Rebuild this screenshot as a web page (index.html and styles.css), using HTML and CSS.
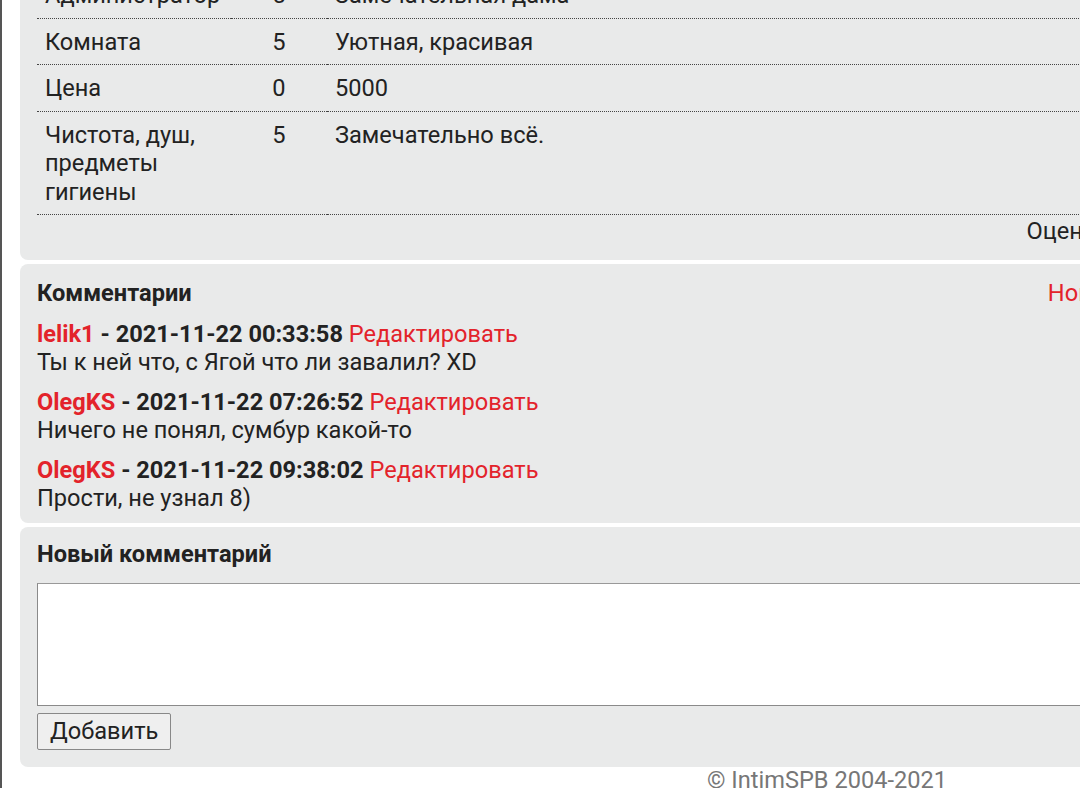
FILE: index.html
```html
<!DOCTYPE html>
<html lang="ru">
<head>
  <meta charset="UTF-8">
  <meta name="viewport" content="width=device-width, initial-scale=1.0">
  <title>Отчёт — IntimSPB</title>
  <link rel="stylesheet" href="styles.css">
</head>
<body>
  <div class="page">
    <!-- Оценки по пунктам -->
    <div class="panel report">
      <table class="marks">
        <tr>
          <td class="name">Администратор</td>
          <td class="mark">5</td>
          <td class="note">Замечательная дама</td>
        </tr>
        <tr>
          <td class="name">Комната</td>
          <td class="mark">5</td>
          <td class="note">Уютная, красивая</td>
        </tr>
        <tr>
          <td class="name">Цена</td>
          <td class="mark">0</td>
          <td class="note">5000</td>
        </tr>
        <tr>
          <td class="name">Чистота, душ, предметы гигиены</td>
          <td class="mark">5</td>
          <td class="note">Замечательно всё.</td>
        </tr>
      </table>
      <div class="total">Оценка отчёта: 3.75 (4)</div>
    </div>

    <!-- Комментарии -->
    <div class="panel comments">
      <div class="comments-head">
        <span class="title">Комментарии</span>
        <a href="#new" class="link">Новый комментарий</a>
      </div>
      <div class="comment">
        <div class="meta"><a href="#" class="user">lelik1</a> - 2021-11-22 00:33:58 <a href="#" class="edit">Редактировать</a></div>
        <div class="text">Ты к ней что, с Ягой что ли завалил? XD</div>
      </div>
      <div class="comment">
        <div class="meta"><a href="#" class="user">OlegKS</a> - 2021-11-22 07:26:52 <a href="#" class="edit">Редактировать</a></div>
        <div class="text">Ничего не понял, сумбур какой-то</div>
      </div>
      <div class="comment">
        <div class="meta"><a href="#" class="user">OlegKS</a> - 2021-11-22 09:38:02 <a href="#" class="edit">Редактировать</a></div>
        <div class="text">Прости, не узнал 8)</div>
      </div>
    </div>

    <!-- Форма нового комментария -->
    <form class="panel new-comment" id="new">
      <div class="title">Новый комментарий</div>
      <textarea name="text"></textarea>
      <button type="button">Добавить</button>
    </form>

    <div class="footer">&copy; IntimSPB 2004-2021</div>
  </div>
</body>
</html>
```

FILE: styles.css
```css
* {
  margin: 0;
  padding: 0;
  box-sizing: border-box;
}

html {
  overflow: hidden;
}

body {
  font-family: Roboto, 'Noto Sans', sans-serif;
  font-size: 23.6px;
  line-height: 28px;
  color: #222;
  background: #fff;
}

a {
  text-decoration: none;
  color: #e3232b;
}

.page {
  width: 1634px;
  margin-top: -45px;
  padding-left: 18px;
  border-left: 2px solid #555;
}

.panel {
  display: block;
  width: 1278px;
  background: #e9eaea;
  border-radius: 8px;
  padding: 17px;
}

.panel + .panel {
  margin-top: 4px;
}


/* таблица оценок */
.report {
  padding-bottom: 15px;
}

.marks {
  width: 100%;
  border-collapse: separate;
  border-spacing: 0;
}

.marks td {
  vertical-align: top;
  padding: 9px 8px 8px;
  line-height: 28.5px;
  border-bottom: 1px dotted #444;
}

.marks .name {
  width: 194px;
}

.marks .mark {
  width: 96px;
  text-align: center;
}

.total {
  text-align: right;
  padding-top: 2px;
}


/* комментарии */
.comments {
  padding-top: 15px;
  padding-bottom: 11px;
}

.comments-head {
  display: flex;
  justify-content: space-between;
  margin-bottom: 13px;
}

.title {
  font-weight: bold;
}

.comment {
  margin-bottom: 12px;
}

.comment:last-child {
  margin-bottom: 0;
}

.meta {
  font-weight: bold;
}

.meta .edit {
  font-weight: normal;
}


/* форма */
.new-comment {
  padding-top: 13px;
}

.new-comment .title {
  margin-bottom: 15px;
}

.new-comment textarea {
  display: block;
  width: 100%;
  height: 123px;
  border: 1px solid #8a8a8a;
  border-top-color: #999;
  background: #fff;
  resize: none;
  font: inherit;
}

.new-comment button {
  margin-top: 7px;
  padding: 3px 12px 4px;
  font: inherit;
  color: #222;
  background: #efefef;
  border: 1px solid #888;
  border-radius: 2px;
}

.footer {
  text-align: center;
  color: #777;
  line-height: 26px;
}
```
